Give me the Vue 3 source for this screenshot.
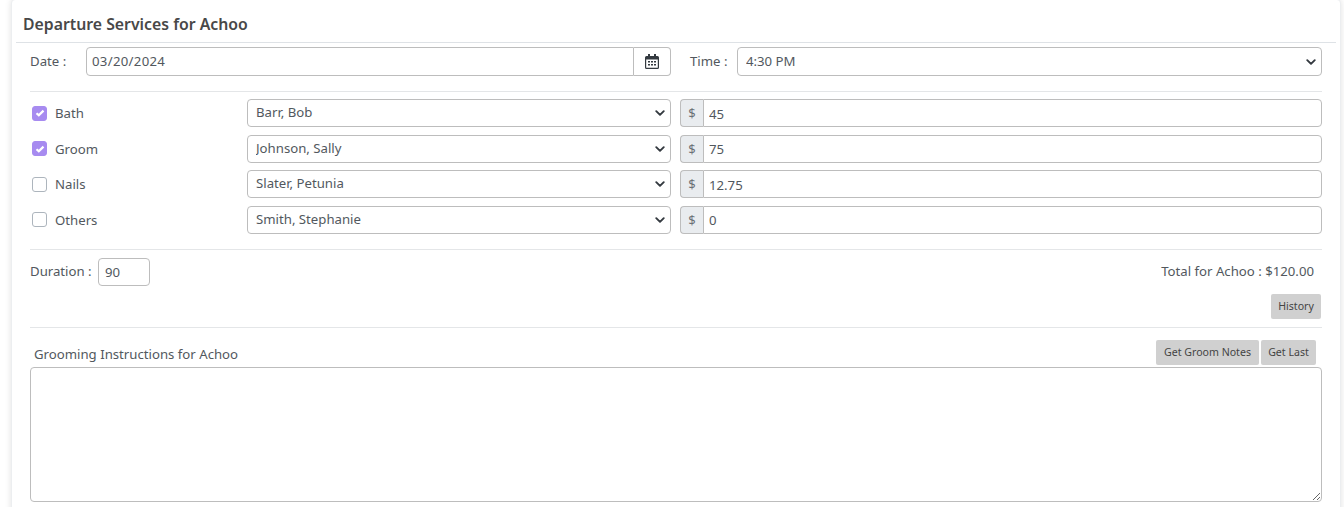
<script setup>
const services = [
  { name: 'Bath', checked: true, staff: 'Barr, Bob', price: '45' },
  { name: 'Groom', checked: true, staff: 'Johnson, Sally', price: '75' },
  { name: 'Nails', checked: false, staff: 'Slater, Petunia', price: '12.75' },
  { name: 'Others', checked: false, staff: 'Smith, Stephanie', price: '0' },
]
</script>

<template>
  <div class="page">
    <section class="card">
      <h2 class="title">Departure Services for Achoo</h2>
      <div class="body">
        <div class="date-row">
          <span class="date-label">Date :</span>
          <div class="date-group">
            <input class="field date-input" value="03/20/2024" />
            <span class="cal-addon">
              <svg width="14" height="15" viewBox="0 0 14 15">
                <path fill="#343a40" fill-rule="evenodd" d="M3 0h2v2h4V0h2v2h1.5A1.5 1.5 0 0 1 14 3.5v10a1.5 1.5 0 0 1-1.5 1.5h-11A1.5 1.5 0 0 1 0 13.5v-10A1.5 1.5 0 0 1 1.5 2H3V0zM1.2 5.5v8c0 .2.1.3.3.3h11c.2 0 .3-.1.3-.3v-8H1.2zM3 7h2v1.6H3V7zm3 0h2v1.6H6V7zm3 0h2v1.6H9V7zm-6 3h2v1.6H3V10zm3 0h2v1.6H6V10zm3 0h2v1.6H9V10z"/>
              </svg>
            </span>
          </div>
          <span class="time-label">Time :</span>
          <select class="field select time-select"><option>4:30 PM</option></select>
        </div>
        <hr class="rule rule-a" />
        <div class="services">
          <div v-for="s in services" :key="s.name" class="service">
            <span class="check" :class="{ on: s.checked }">
              <svg v-if="s.checked" width="10" height="8" viewBox="0 0 10 8">
                <path d="M1.5 4.2 3.8 6.3 8.5 1.6" fill="none" stroke="#fff" stroke-width="2.2"/>
              </svg>
            </span>
            <span class="service-name">{{ s.name }}</span>
            <select class="field select staff"><option>{{ s.staff }}</option></select>
            <div class="price">
              <span class="dollar">$</span>
              <input class="field price-input" :value="s.price" />
            </div>
          </div>
        </div>
        <hr class="rule rule-b" />
        <div class="duration-row">
          <span class="duration-label">Duration :</span>
          <input class="field duration" value="90" />
          <span class="total">Total for Achoo : $120.00</span>
        </div>
        <div class="history-row"><button class="btn history">History</button></div>
        <hr class="rule rule-c" />
        <div class="notes-head">
          <span class="notes-label">Grooming Instructions for Achoo</span>
          <div class="notes-btns">
            <button class="btn groom-notes">Get Groom Notes</button>
            <button class="btn get-last">Get Last</button>
          </div>
        </div>
        <textarea class="notes"></textarea>
      </div>
    </section>
  </div>
</template>

<style>
html, body { margin: 0; background: #fff; overflow: hidden; }
</style>

<style scoped>
.page {
  height: 507px;
  overflow: hidden;
  padding: 0 3px 0 11px;
  box-sizing: border-box;
  font-family: "Noto Sans", "Open Sans", sans-serif;
  font-size: 13.2px;
  color: #52585e;
}
.card {
  height: 520px;
  margin-top: -1px;
  box-sizing: border-box;
  background: #fff;
  border-radius: 4px;
  border: 1px solid #eceef0;
  box-shadow: 0 0 6px rgba(0, 0, 0, .12);
  padding: 0 4px;
}
.title {
  margin: 0;
  height: 42px;
  box-sizing: content-box;
  border-bottom: 1px solid #dee2e6;
  padding-left: 7px;
  font-size: 15.8px;
  font-weight: 600;
  line-height: 48px;
  color: #484848;
}
.body { padding: 0 14px; }
.date-row { display: flex; align-items: center; margin-top: 4px; height: 29px; }
.date-label { width: 56px; margin-top: -2px; }
.field {
  box-sizing: border-box;
  font: inherit;
  color: #52585e;
  background-color: #fff;
  border: 1px solid #bdbdbd;
  border-radius: 4px;
  outline: none;
  padding: 0 8px;
}
.date-group { display: flex; width: 585px; height: 29px; }
.date-input {
  flex: 1;
  min-width: 0;
  padding: 0 5px 1px;
  letter-spacing: .3px;
  border-radius: 4px 0 0 4px;
}
.cal-addon {
  width: 37px;
  box-sizing: border-box;
  display: flex;
  align-items: center;
  justify-content: center;
  border: 1px solid #bdbdbd;
  border-left: 0;
  border-radius: 0 4px 4px 0;
}
.time-label { margin-left: 19px; width: 47px; margin-top: -2px; }
.select {
  appearance: none;
  background-image: url("data:image/svg+xml,%3csvg xmlns='http://www.w3.org/2000/svg' viewBox='0 0 16 16'%3e%3cpath fill='none' stroke='%23343a40' stroke-linecap='round' stroke-linejoin='round' stroke-width='3' d='M2 5l6 6 6-6'/%3e%3c/svg%3e");
  background-repeat: no-repeat;
  background-position: right 5px center;
  background-size: 10px 10px;
}
.time-select { flex: 1; height: 29px; padding-bottom: 2px; }
.rule { border: 0; border-top: 1px solid #e4e6e8; margin: 0; }
.rule-a { margin-top: 15px; }
.services { padding-top: 7px; }
.service { display: flex; align-items: center; height: 28px; margin-bottom: 7.67px; }
.check {
  width: 15px;
  height: 15px;
  box-sizing: border-box;
  margin-left: 2px;
  border: 1px solid #adb5bd;
  border-radius: 3px;
  display: flex;
  align-items: center;
  justify-content: center;
}
.check.on { background: #a78bf0; border-color: #a78bf0; }
.service-name { width: 192px; margin-left: 8px; }
.staff { width: 424px; height: 28px; padding-bottom: 2px; }
.price { display: flex; flex: 1; height: 28px; margin-left: 9px; }
.dollar {
  width: 23px;
  box-sizing: border-box;
  display: flex;
  align-items: center;
  justify-content: center;
  background: #e9ecef;
  border: 1px solid #bdbdbd;
  border-right: 0;
  border-radius: 4px 0 0 4px;
  font-size: 13px;
  color: #6c7277;
}
.price-input { flex: 1; min-width: 0; border-radius: 0 4px 4px 0; padding: 1px 5px 0; }
.rule-b { margin-top: 15px; }
.duration-row { display: flex; align-items: center; height: 28px; margin-top: 8px; }
.duration-label { width: 68px; margin-top: -2px; }
.duration { width: 52px; height: 28px; padding: 0 6px; }
.total { margin-left: auto; margin-right: 8px; margin-top: -1px; }
.history-row { display: flex; justify-content: flex-end; margin-top: 8px; }
.btn {
  box-sizing: border-box;
  height: 25px;
  padding: 0;
  border: 0;
  border-radius: 2px;
  background: #d0d0d0;
  color: #444;
  font: inherit;
  font-size: 10.6px;
}
.history { width: 50px; margin-right: 1px; }
.rule-c { margin-top: 8px; }
.notes-head { display: flex; height: 39px; align-items: flex-end; justify-content: space-between; padding-left: 4px; }
.notes-label { line-height: 18px; margin-bottom: 4px; }
.notes-btns { display: flex; gap: 2px; margin-right: 6px; margin-bottom: 2px; }
.groom-notes { width: 103px; }
.get-last { width: 55px; }
.notes {
  display: block;
  box-sizing: border-box;
  width: 100%;
  height: 135px;
  border: 1px solid #bdbdbd;
  border-radius: 4px;
  outline: none;
  font: inherit;
}
</style>
